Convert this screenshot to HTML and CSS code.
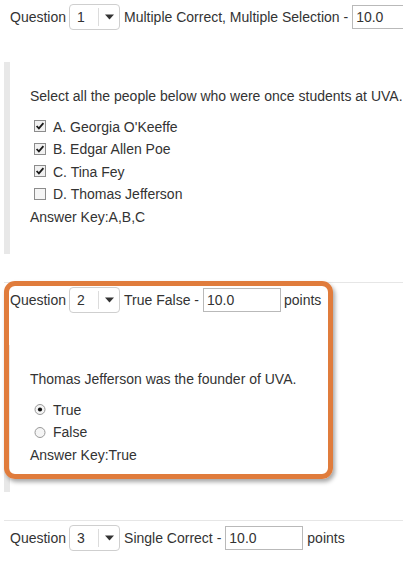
FILE: index.html
```html
<!DOCTYPE html>
<html>
<head>
<meta charset="utf-8">
<link rel="stylesheet" href="styles.css">
</head>
<body>
<div class="page">
  <section class="question first">
    <div class="q-head">
      <span class="lbl q-lbl">Question</span>
      <span class="select"><span class="sel-val">1</span><span class="sel-btn"><svg width="9" height="6" viewBox="0 0 9 6"><path d="M0 0.5 H9 L4.5 5.5 Z" fill="#333"/></svg></span></span>
      <span class="lbl">Multiple Correct, Multiple Selection -</span>
      <span class="input">10.0</span>
      <span class="lbl">points</span>
    </div>
    <div class="q-body">
      <p class="q-text">Select all the people below who were once students at UVA.</p>
      <ul class="options">
        <li><svg class="mark" width="13" height="13" viewBox="0 0 13 13"><rect x="0.5" y="0.5" width="11" height="11" fill="#f1f1f1" stroke="#8c8c8c"/><path d="M2.6 6 L4.9 8.4 L9.4 3.2" fill="none" stroke="#1a1a1a" stroke-width="1.8"/></svg>A. Georgia O'Keeffe</li>
        <li><svg class="mark" width="13" height="13" viewBox="0 0 13 13"><rect x="0.5" y="0.5" width="11" height="11" fill="#f1f1f1" stroke="#8c8c8c"/><path d="M2.6 6 L4.9 8.4 L9.4 3.2" fill="none" stroke="#1a1a1a" stroke-width="1.8"/></svg>B. Edgar Allen Poe</li>
        <li><svg class="mark" width="13" height="13" viewBox="0 0 13 13"><rect x="0.5" y="0.5" width="11" height="11" fill="#f1f1f1" stroke="#8c8c8c"/><path d="M2.6 6 L4.9 8.4 L9.4 3.2" fill="none" stroke="#1a1a1a" stroke-width="1.8"/></svg>C. Tina Fey</li>
        <li><svg class="mark" width="13" height="13" viewBox="0 0 13 13"><rect x="0.5" y="0.5" width="11" height="11" fill="#f5f5f5" stroke="#8c8c8c"/></svg>D. Thomas Jefferson</li>
      </ul>
      <p class="answer">Answer Key:A,B,C</p>
    </div>
  </section>

  <section class="question highlighted">
    <div class="q-head">
      <span class="lbl q-lbl">Question</span>
      <span class="select"><span class="sel-val">2</span><span class="sel-btn"><svg width="9" height="6" viewBox="0 0 9 6"><path d="M0 0.5 H9 L4.5 5.5 Z" fill="#333"/></svg></span></span>
      <span class="lbl">True False -</span>
      <span class="input">10.0</span>
      <span class="lbl pts-tight">points</span>
    </div>
    <div class="q-body">
      <p class="q-text">Thomas Jefferson was the founder of UVA.</p>
      <ul class="options">
        <li><svg class="mark" width="13" height="13" viewBox="0 0 13 13"><circle cx="6" cy="6.5" r="5" fill="#f5f5f5" stroke="#999"/><circle cx="6" cy="6.5" r="2.1" fill="#111"/></svg>True</li>
        <li><svg class="mark" width="13" height="13" viewBox="0 0 13 13"><circle cx="6" cy="6.5" r="5" fill="#f5f5f5" stroke="#999"/></svg>False</li>
      </ul>
      <p class="answer">Answer Key:True</p>
    </div>
    <div class="highlight"></div>
  </section>

  <section class="question">
    <div class="q-head">
      <span class="lbl q-lbl">Question</span>
      <span class="select"><span class="sel-val">3</span><span class="sel-btn"><svg width="9" height="6" viewBox="0 0 9 6"><path d="M0 0.5 H9 L4.5 5.5 Z" fill="#333"/></svg></span></span>
      <span class="lbl">Single Correct -</span>
      <span class="input">10.0</span>
      <span class="lbl">points</span>
    </div>
  </section>
</div>
</body>
</html>
```

FILE: styles.css
```css
html, body {
  margin: 0;
  padding: 0;
  overflow: hidden;
  background: #fff;
}
body {
  font-family: "Liberation Sans", Arial, sans-serif;
  font-size: 14px;
  color: #333;
}
.page {
  width: 403px;
}
.question {
  position: relative;
  margin-left: 4px;
  border-top: 1px solid #e6e6e6;
  padding-bottom: 28px;
}
.question.first {
  border-top: none;
}
.q-head {
  display: flex;
  align-items: center;
  gap: 4px;
  padding: 4px 0 0 6px;
  white-space: nowrap;
}
.lbl {
  flex-shrink: 0;
}
.q-lbl {
  margin-right: -1px;
}
.pts-tight {
  margin-left: -1px;
}
.select {
  flex-shrink: 0;
  display: flex;
  width: 51px;
  height: 26px;
  box-sizing: border-box;
  border: 1px solid #cfcfcf;
  border-radius: 4px;
  background: #fff;
}
.sel-val {
  width: 28px;
  box-sizing: border-box;
  padding-left: 7px;
  line-height: 24px;
}
.sel-btn {
  flex: 1;
  margin: 3px 0;
  border-left: 1px solid #dcdcdc;
  display: flex;
  align-items: center;
  justify-content: center;
}
.input {
  flex-shrink: 0;
  width: 78px;
  height: 24px;
  box-sizing: border-box;
  border: 1px solid #b9b9b9;
  padding-left: 3px;
  line-height: 22px;
}
.q-body {
  margin-top: 32px;
  border-left: 6px solid #e8e8e8;
  padding: 23px 0 26px 20px;
}
.q-text {
  margin: 0 0 8px;
  line-height: 22.5px;
}
.options {
  list-style: none;
  margin: 0;
  padding: 0 0 0 4px;
}
.options li {
  display: flex;
  align-items: center;
  height: 22.5px;
}
.mark {
  margin-right: 6px;
  flex-shrink: 0;
}
.answer {
  margin: 0;
  line-height: 22.5px;
}
.highlight {
  position: absolute;
  left: 0;
  top: -2px;
  width: 329px;
  height: 198px;
  box-sizing: border-box;
  border: 5px solid #e07c3c;
  border-radius: 11px;
  box-shadow: 2px 3px 4px rgba(0, 0, 0, 0.35);
  pointer-events: none;
}
```
